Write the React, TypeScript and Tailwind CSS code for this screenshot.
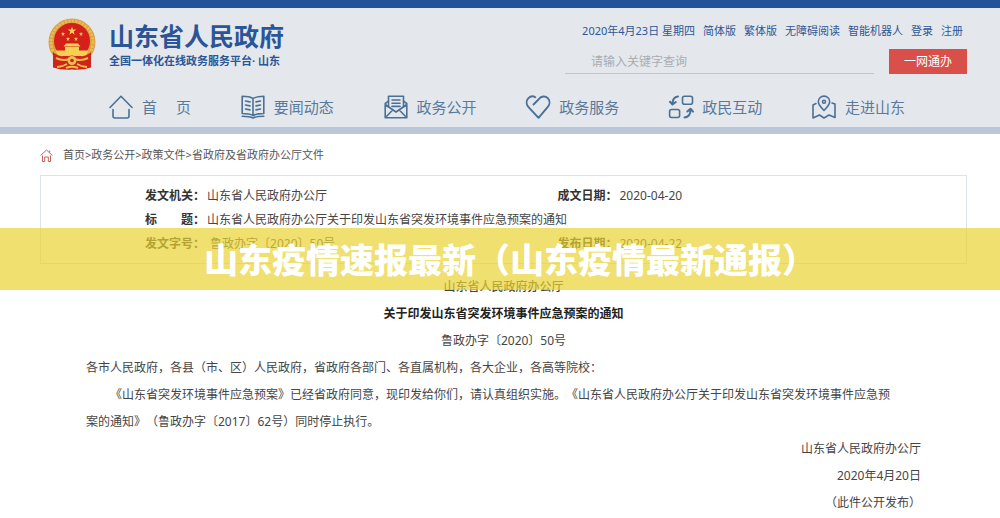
import type { ReactNode } from "react";

interface NavEntry {
  label: string;
  icon: ReactNode;
}

const quickLinks = ["简体版", "繁体版", "无障碍阅读", "智能机器人", "登录", "注册"];

const crumbs = ["首页", "政务公开", "政策文件", "省政府及省政府办公厅文件"];

const navEntries: NavEntry[] = [
  {
    label: "首　 页",
    icon: (
      <>
        <path d="M1 12.5 12 1.2l11 11.3" />
        <path d="M4 14.5V21q0 2 2 2h12q2 0 2-2v-6.5" />
      </>
    ),
  },
  {
    label: "要闻动态",
    icon: (
      <>
        <path d="M12 3.6C9 1.6 5 1.3 1.2 1.3v17.2c4 0 7.8.3 10.8 2 3-1.7 6.8-2 10.8-2V1.3C19 1.3 15 1.6 12 3.6zM12 3.6v16.9" />
        <path d="M1.2 21.2c4 0 7.800.2 10.8 1.8 3-1.6 6.8-1.8 10.8-1.8" />
        <path d="M4.5 6l4.500.9M4.5 10l4.500.9M4.5 14l4.500.9M19.5 6l-4.500.9M19.5 10l-4.500.9M19.5 14l-4.500.9" />
      </>
    ),
  },
  {
    label: "政务公开",
    icon: (
      <>
        <path d="M4.5 12V1.3h15V12M8 5h8M8 8.2h8M8 11.4h8" />
        <path d="M4.5 6.2 1.2 8.5v14.2h21.6V8.5l-3.3-2.3M1.2 9.5 12 17l10.8-7.5M1.2 22.7l7.5-7.7M22.8 22.7 15.3 15" />
      </>
    ),
  },
  {
    label: "政务服务",
    icon: (
      <path
        strokeWidth="1.9"
        d="M7.5 9.5 12.5 4.5C15 1.2 19 .4 21.8 3.2c2.7 2.9 2 6.8-.6 9.5L12.5 22.8 3 12.7C.2 9.8-.2 5.8 2.4 3.2 4.5 1 7.3.9 9.3 2.2"
      />
    ),
  },
  {
    label: "政民互动",
    icon: (
      <>
        <rect x="13.5" y="1.3" width="10" height="8" rx="2" />
        <rect x=".6" y="14.5" width="10" height="8" rx="2" />
        <path
          strokeWidth="2"
          d="M9 1.5C5.5 2 3.5 4.5 3.5 8.5M1 6.8l2.5 2.7L6.8 7M15.5 22.5c4-.5 6-3 6-7.5M18.3 16.5l3.2-2.8 2.5 3"
        />
      </>
    ),
  },
  {
    label: "走进山东",
    icon: (
      <>
        <path d="M12 15.5C8.5 12 6.3 9.6 6.3 6.8a5.7 5.7 0 0 1 11.4 0c0 2.8-2.2 5.2-5.7 8.7z" />
        <circle cx="12" cy="6.8" r="1.5" />
        <path d="M4 8.5 1 10v13l6.5-3 4.5 3 5-3 6 2.5V9l-3-1" />
      </>
    ),
  },
];

const STAR = "M0-3 .7-1H2.9L1.1.4 1.8 2.5 0 1.2-1.8 2.5-1.1.4-2.9-1H-.7z";

export default function App() {
  return (
    <div className="relative bg-white font-['Noto_Sans','Noto_Sans_CJK_SC',sans-serif] text-xs text-[#454545]">
      <SiteHeader />
      <main className="pl-10 pr-[33px]">
        <Breadcrumb />
        <DocumentInfo />
        <Article />
      </main>
      <div className="absolute inset-x-0 top-[228px] flex h-[62px] items-center justify-center bg-[#ead332]/70 pl-5">
        <p className="whitespace-nowrap font-['Noto_Sans_CJK_SC',sans-serif] text-[34px] font-black leading-[62px] text-white">
          山东疫情速报最新（山东疫情最新通报）
        </p>
      </div>
    </div>
  );
}

function SiteHeader() {
  return (
    <header className="border-b-[7px] border-t-8 border-b-[#b9c7d6] border-t-[#225297] bg-[#e4e8ed] pb-[6px] pt-[9px] text-[#2f5795]">
      <div className="flex items-start justify-between pl-[47px] pr-[33px]">
        <div className="flex gap-3">
          <Emblem />
          <div className="mt-1 whitespace-nowrap font-bold text-[#2a5596]">
            <h1 className="text-[25px] leading-[30px]">山东省人民政府</h1>
            <p className="text-[11px] leading-5">全国一体化在线政务服务平台· 山东</p>
          </div>
        </div>

        <div className="mt-1 w-[402px]">
          <div className="flex justify-end gap-2 whitespace-nowrap pr-1 text-[11px] leading-5">
            <span>2020年4月23日 星期四</span>
            {quickLinks.map((link) => (
              <a key={link} href="#">
                {link}
              </a>
            ))}
          </div>
          <form className="mt-2 flex gap-[15px]">
            <input
              type="text"
              aria-label="请输入关键字查询"
              placeholder="请输入关键字查询"
              className="h-[25px] min-w-0 flex-1 border-b border-[#c3c7cc] pl-[26px] text-xs outline-none placeholder:text-[#a9acb0]"
            />
            <button type="button" className="h-[25px] w-[78px] bg-[#d94f49] text-xs text-white">
              一网通办
            </button>
          </form>
        </div>
      </div>

      <nav className="mt-[19px] flex justify-between pl-[109px] pr-[95px]">
        {navEntries.map((entry) => (
          <a
            key={entry.label}
            href="#"
            className="flex h-7 items-center gap-[9px] whitespace-pre text-[15px] text-[#587a9c]"
          >
            <svg
              viewBox="0 0 24 24"
              className="size-6 overflow-visible"
              fill="none"
              stroke="#4a7096"
              strokeWidth="1.6"
              strokeLinecap="round"
              strokeLinejoin="round"
            >
              {entry.icon}
            </svg>
            {entry.label}
          </a>
        ))}
      </nav>
    </header>
  );
}

function Breadcrumb() {
  return (
    <div className="mt-[11px] flex h-5 items-center gap-[10px] whitespace-nowrap text-[11px] text-[#555]">
      <svg viewBox="0 0 13 13" className="size-[13px]" fill="none" stroke="#c5605c" strokeLinejoin="round">
        <path d="M.6 6.5 6.5 1l5.9 5.5M2.5 6.5v6h2.2V8h3.6v4.5h2.2v-6M9.7 1.5v2" />
      </svg>
      <div>
        {crumbs.map((crumb, i) => (
          <span key={crumb}>
            {i > 0 && ">"}
            <a href="#">{crumb}</a>
          </span>
        ))}
      </div>
    </div>
  );
}

function DocumentInfo() {
  return (
    <dl className="mt-[10px] grid grid-cols-2 gap-x-1 whitespace-nowrap border border-[#dde3e6] pb-[7px] pl-[104px] pt-2 leading-6">
      <InfoItem label="发文机关：" value="山东省人民政府办公厅" />
      <InfoItem label="成文日期：" value="2020-04-20" />
      <div className="col-span-2">
        <InfoItem label="标　　题：" value="山东省人民政府办公厅关于印发山东省突发环境事件应急预案的通知" />
      </div>
      <InfoItem label="发文字号：" value=" 鲁政办字〔2020〕50号" />
      <InfoItem label="发布日期：" value="2020-04-22" />
    </dl>
  );
}

function InfoItem({ label, value }: { label: string; value: string }) {
  return (
    <div className="flex">
      <dt className="w-[62px] font-bold text-[#333]">{label}</dt>
      <dd className="whitespace-pre">{value}</dd>
    </div>
  );
}

function Article() {
  return (
    <article className="mt-[9px] px-[46px] leading-[27px] [text-spacing-trim:space-all]">
      <div className="text-center">
        <p className="font-medium">山东省人民政府办公厅</p>
        <h2 className="font-bold text-[#222]">关于印发山东省突发环境事件应急预案的通知</h2>
        <p>鲁政办字〔2020〕50号</p>
      </div>
      <p>各市人民政府，各县（市、区）人民政府，省政府各部门、各直属机构，各大企业，各高等院校：</p>
      <p className="indent-6">
        《山东省突发环境事件应急预案》已经省政府同意，现印发给你们，请认真组织实施。《山东省人民政府办公厅关于印发山东省突发环境事件应急预
        <br />
        案的通知》（鲁政办字〔2017〕62号）同时停止执行。
      </p>
      <div className="text-right">
        <p>山东省人民政府办公厅</p>
        <p>2020年4月20日</p>
        <p>（此件公开发布）</p>
      </div>
    </article>
  );
}

/* National emblem: wheat ring, stars, gate and red drapery */
function Emblem() {
  return (
    <svg viewBox="0 0 50 54" className="h-[54px] w-[50px] shrink-0">
      <circle cx="25" cy="25" r="23.5" fill="#d99f3d" />
      <circle cx="25" cy="25" r="21" fill="none" stroke="#e8bb5a" strokeWidth="3" strokeDasharray="2.5 1" />
      <circle cx="25" cy="24" r="18" fill="#d51f1b" />
      <g fill="#f6cf55">
        <path d={STAR} transform="translate(25 14) scale(1.5)" />
        <path d={STAR} transform="translate(16 17) scale(.75)" />
        <path d={STAR} transform="translate(34 17) scale(.75)" />
        <path d={STAR} transform="translate(21 22) scale(.75)" />
        <path d={STAR} transform="translate(29 22) scale(.75)" />
        <path d="M19 26.5h12l2.5 3h-17zM18 30h14v4H18zM8.5 33.500h33L39 39H11z" />
      </g>
      <path d="M6 35q6 5 13 4.500l6-1 6 1q7 .5 13-4.500v15.500q-9 3-19 2-10 1-19-2z" fill="#d0241a" />
      <circle cx="25" cy="43.5" r="4.5" fill="#eebd50" />
      <circle cx="25" cy="43.5" r="1.8" fill="#cf2418" />
      <path
        d="M9 41q6 3 12 1.500M41 41q-6 3-12 1.500M10 50q6-.5 10-3M40 50q-6-.5-10-3M19 51q6-2.500 12 0"
        fill="none"
        stroke="#eebd50"
        strokeWidth="2"
      />
    </svg>
  );
}
